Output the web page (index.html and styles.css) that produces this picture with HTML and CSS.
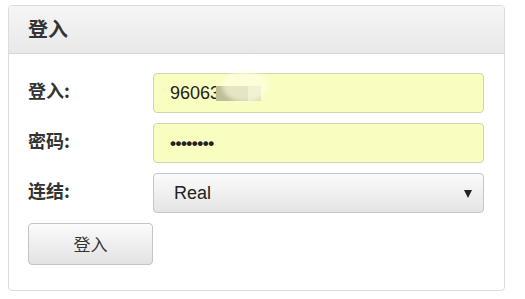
FILE: index.html
```html
<!DOCTYPE html>
<html>
<head>
<meta charset="utf-8">
<link rel="stylesheet" href="styles.css">
</head>
<body>
<div class="panel">
  <div class="panel-head">登入</div>
  <div class="panel-body">
    <div class="form">
      <label class="lbl">登入:</label>
      <div class="field auto"><span class="val">96063</span><span class="smudge"><span class="sm-a"></span><span class="sm-b"></span></span><span class="blob"></span></div>
      <label class="lbl">密码:</label>
      <div class="field auto"><span class="dots">••••••••</span></div>
      <label class="lbl">连结:</label>
      <div class="field select"><span class="val">Real</span><span class="arrow"></span></div>
      <div class="btn">登入</div>
    </div>
  </div>
</div>
</body>
</html>
```
FILE: styles.css
```css
html, body { margin: 0; padding: 0; background: #fff; }
body { padding: 5px 18px 0 8px; font-family: "Liberation Sans", Arial, "Noto Sans CJK SC", sans-serif; }
.panel {
  width: 497px;
  height: 286px;
  border: 1px solid #dcdcdc;
  border-radius: 4px;
  box-sizing: border-box;
  overflow: hidden;
}
.panel-head {
  height: 48px;
  box-sizing: border-box;
  border-bottom: 1px solid #d8d8d8;
  background: linear-gradient(#f6f6f6, #e8e8e8);
  padding-left: 19px;
  display: flex;
  align-items: center;
  font-family: "Noto Sans CJK SC", sans-serif;
  font-weight: 700;
  font-size: 20px;
  color: #333;
  padding-bottom: 2px;
}
.panel-body { padding: 19px 22px 0 19px; }
.form {
  display: grid;
  grid-template-columns: 125px 331px;
  grid-auto-rows: 40px;
  row-gap: 10px;
  align-items: center;
}
.lbl {
  font-family: "Noto Sans CJK SC", sans-serif;
  font-weight: 700;
  font-size: 18px;
  color: #333;
  align-self: start;
  padding-top: 4px;
}
.field {
  height: 40px;
  box-sizing: border-box;
  border: 1px solid #c8c8c8;
  border-radius: 4px;
  display: flex;
  align-items: center;
  padding-left: 16px;
  position: relative;
  font-size: 18px;
  color: #222;
}
.auto { background: #fafdc0; border-color: #d2d2b4; }
.val { line-height: 1; }
.smudge { display: flex; height: 15px; margin-left: -4px; }
.sm-a { width: 32px; background: #bdbd97; }
.sm-b { width: 13px; background: #dcdcb8; }
.blob {
  position: absolute;
  left: 68px;
  top: -4px;
  width: 46px;
  height: 32px;
  border-radius: 50%;
  background: rgba(255,255,230,0.6);
  filter: blur(2px);
}
.dots { font-size: 17px; letter-spacing: -0.5px; font-weight: 700; padding-top: 2px; }
.select {
  background: linear-gradient(#fbfbfb, #e4e4e4);
  border-color: #c6c6c6;
  padding-left: 20px;
}
.arrow {
  position: absolute;
  right: 11px;
  top: 16px;
  width: 0; height: 0;
  border-left: 4px solid transparent;
  border-right: 4px solid transparent;
  border-top: 8px solid #222;
}
.btn {
  grid-column: 1;
  margin-top: 1px;
  height: 42px;
  width: 125px;
  box-sizing: border-box;
  border: 1px solid #c4c4c4;
  border-radius: 4px;
  background: linear-gradient(#fbfbfb, #e2e2e2);
  display: flex;
  align-items: center;
  justify-content: center;
  font-family: "Noto Sans CJK SC", sans-serif;
  font-size: 17px;
  color: #333;
}
```
